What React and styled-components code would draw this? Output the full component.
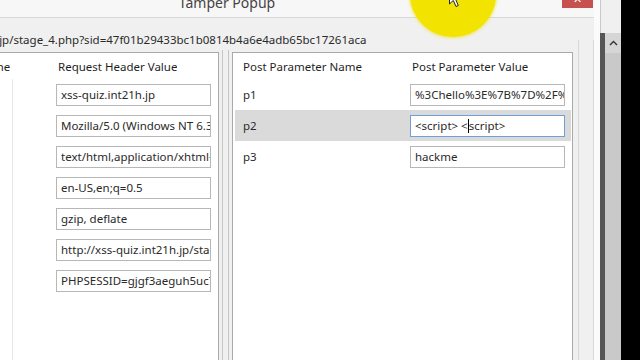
import React from 'react';
import styled, { createGlobalStyle } from 'styled-components';

const GlobalStyle = createGlobalStyle`
  html, body { margin: 0; padding: 0; background: #000; }
  body { font-family: "Noto Sans", "Open Sans", sans-serif; }
  * { box-sizing: border-box; }
`;

const Screen = styled.div`
  position: relative;
  width: 640px;
  height: 360px;
  overflow: hidden;
  display: flex;
  background: #000;
`;

const Dialog = styled.div`
  flex: 0 0 750px;
  margin-left: -150px;
  display: flex;
  flex-direction: column;
  background: #f0f0f0;
  border-right: 6px solid #fbfbfb;
`;

const TitleBar = styled.div`
  margin-top: -12px;
  height: 30px;
  display: flex;
  background: #f7f7f7;
  border-bottom: 1px solid #d8d8d8;
`;

const Title = styled.div`
  flex: 1;
  text-align: center;
  padding-left: 42px;
  font-size: 14px;
  line-height: 29px;
  color: #444;
`;

const CloseButton = styled.div`
  width: 31px;
  height: 20px;
  background: #c7514f;
  color: #fff;
  font-size: 11px;
  display: flex;
  align-items: flex-end;
  justify-content: center;
  padding-bottom: 2px;
  margin-right: 1px;
`;

const Body = styled.div`
  flex: 1;
  display: flex;
  min-height: 0;
`;

const Content = styled.div`
  flex: 1;
  display: flex;
  flex-direction: column;
  padding-left: 31px;
`;

const UrlBar = styled.div`
  height: 34px;
  padding-top: 14px;
  font-size: 11.5px;
  line-height: 16px;
  color: #2a2a2a;
  white-space: nowrap;
`;

const Panels = styled.div`
  flex: 1;
  display: flex;
`;

const Panel = styled.div`
  flex: 0 0 ${p => p.$width}px;
  display: flex;
  flex-direction: column;
  background: #fff;
  border: 1px solid #a9a9a9;
  border-bottom: none;
  padding: ${p => p.$inset};
`;

const Splitter = styled.div`
  flex: 0 0 13px;
  margin-top: -2px;
  background: linear-gradient(to right,
    #f0f0f0 0, #f0f0f0 3px, #c6c6c6 3px, #c6c6c6 4px,
    #f0f0f0 4px, #f0f0f0 9px, #c6c6c6 9px, #c6c6c6 10px, #f0f0f0 10px);
`;

const HeaderRow = styled.div`
  flex: 0 0 26px;
  display: flex;
  align-items: center;
  font-size: 11.5px;
  color: #1f1f1f;
  white-space: nowrap;
`;

const HeaderCell = styled.div`
  flex: 0 0 ${p => (p.$width ? `${p.$width}px` : 'auto')};
  padding-left: ${p => p.$pad}px;
  overflow: hidden;
`;

const Row = styled.div`
  flex: 0 0 31px;
  display: flex;
  align-items: center;
  background: ${p => (p.$selected ? '#dadada' : 'transparent')};
  font-size: 11.5px;
  color: #2a2a2a;
  white-space: nowrap;
`;

const Filler = styled.div`
  flex: 1;
  display: flex;
`;

const NameCell = styled.div`
  flex: 0 0 ${p => p.$width}px;
  align-self: stretch;
  display: flex;
  align-items: center;
  padding-left: ${p => p.$pad}px;
  border-right: ${p => (p.$rule ? '1px solid #e8e8e8' : 'none')};
  overflow: hidden;
`;

const ValueCell = styled.div`
  flex: 1;
  display: flex;
  align-items: center;
  padding-left: ${p => p.$pad}px;
`;

const TextBox = styled.div`
  width: 155px;
  height: 22px;
  display: flex;
  align-items: center;
  padding: 0 3px 0 4px;
  background: #fff;
  border: 1px solid ${p => (p.$focused ? '#6f9fd8' : '#b7b7b7')};
  overflow: hidden;
  white-space: nowrap;
  color: #2a2a2a;
`;

const Caret = styled.span`
  display: inline-block;
  width: 1px;
  height: 14px;
  background: #000;
  vertical-align: middle;
`;

const Gutter = styled.div`
  flex: 0 0 21px;
  display: flex;
  flex-direction: column;
  padding-left: 5px;
`;

const GroupEdge = styled.div`
  flex: 1;
  margin-top: 22px;
  border-left: 1px solid #d7d7d7;
  border-right: 1px solid #d7d7d7;
`;

const OuterScroll = styled.div`
  flex: 0 0 21px;
  display: flex;
  flex-direction: column;
`;

const ScrollTop = styled.div`
  flex: 0 0 33px;
  background: #f0f0f0;
  border-left: 1px solid #c9c9c9;
`;

const ScrollTrack = styled.div`
  flex: 1;
  display: flex;
  flex-direction: column;
  background: #c9c9c9;
  border-left: 5px solid #565656;
`;

const ScrollButton = styled.div`
  flex: 0 0 20px;
  display: flex;
  align-items: center;
  justify-content: center;
  background: #d6d6d6;
`;

const Backdrop = styled.div`
  flex: 1;
  background: #000;
`;

const Spotlight = styled.div`
  position: absolute;
  left: 410px;
  top: -49px;
  width: 86px;
  height: 86px;
  border-radius: 50%;
  background: #f2e300;
  box-shadow: 0 0 3px 1px rgba(242, 227, 0, 0.7);
`;

const Pointer = styled.svg`
  position: absolute;
  left: 449px;
  top: -12px;
`;

const headers = [
  ['Host', 'xss-quiz.int21h.jp'],
  ['User-Agent', 'Mozilla/5.0 (Windows NT 6.3; WOW64; rv:32.0) Gecko/20100101 Firefox/32.0'],
  ['Accept', 'text/html,application/xhtml+xml,application/xml;q=0.9,*/*;q=0.8'],
  ['Accept-Language', 'en-US,en;q=0.5'],
  ['Accept-Encoding', 'gzip, deflate'],
  ['Referer', 'http://xss-quiz.int21h.jp/stage_4.php?sid=47f01b29433bc1b0814b4a6e4adb65bc17261aca'],
  ['Cookie', 'PHPSESSID=gjgf3aeguh5uc7l1q0v2m3k8p4'],
];

export default function App() {
  return (
    <>
      <GlobalStyle />
      <Screen>
        <Dialog>
          <TitleBar>
            <Title>Tamper Popup</Title>
            <CloseButton>✕</CloseButton>
          </TitleBar>
          <Body>
            <Content>
              <UrlBar>http://xss-quiz.int21h.jp/stage_4.php?sid=47f01b29433bc1b0814b4a6e4adb65bc17261aca</UrlBar>
              <Panels>
                <Panel $width={338} $inset="0">
                  <HeaderRow>
                    <HeaderCell $width={131} $pad={6}>Request Header Name</HeaderCell>
                    <HeaderCell $pad={45}>Request Header Value</HeaderCell>
                  </HeaderRow>
                  {headers.map(([name, value]) => (
                    <Row key={name}>
                      <NameCell $width={131} $pad={6} $rule>{name}</NameCell>
                      <ValueCell $pad={43}>
                        <TextBox>{value}</TextBox>
                      </ValueCell>
                    </Row>
                  ))}
                  <Filler>
                    <NameCell $width={131} $pad={6} $rule />
                  </Filler>
                </Panel>
                <Splitter />
                <Panel $width={341} $inset="0 1px 0 2px">
                  <HeaderRow>
                    <HeaderCell $width={173} $pad={8}>Post Parameter Name</HeaderCell>
                    <HeaderCell $pad={4}>Post Parameter Value</HeaderCell>
                  </HeaderRow>
                  <Row>
                    <NameCell $width={173} $pad={8}>p1</NameCell>
                    <ValueCell $pad={2}>
                      <TextBox>%3Chello%3E%7B%7D%2F%7D%3C</TextBox>
                    </ValueCell>
                  </Row>
                  <Row $selected>
                    <NameCell $width={173} $pad={8}>p2</NameCell>
                    <ValueCell $pad={2}>
                      <TextBox $focused>
                        <span>&lt;script&gt; &lt;<Caret />script&gt;</span>
                      </TextBox>
                    </ValueCell>
                  </Row>
                  <Row>
                    <NameCell $width={173} $pad={8}>p3</NameCell>
                    <ValueCell $pad={2}>
                      <TextBox>hackme</TextBox>
                    </ValueCell>
                  </Row>
                </Panel>
              </Panels>
            </Content>
            <Gutter>
              <GroupEdge />
            </Gutter>
          </Body>
        </Dialog>
        <OuterScroll>
          <ScrollTop />
          <ScrollTrack>
            <ScrollButton>
              <svg width="9" height="6" viewBox="0 0 9 6">
                <path d="M1 5 L4.5 1.5 L8 5" fill="none" stroke="#333" strokeWidth="1.4" />
              </svg>
            </ScrollButton>
          </ScrollTrack>
        </OuterScroll>
        <Backdrop />
        <Spotlight />
        <Pointer width="13" height="20" viewBox="0 0 13 20">
          <path d="M0.5 0.5 L0.5 16 L4.3 12.4 L7 18.5 L9.3 17.5 L6.7 11.5 L11.5 11.5 Z" fill="#fff" stroke="#222" strokeWidth="1" />
        </Pointer>
      </Screen>
    </>
  );
}
